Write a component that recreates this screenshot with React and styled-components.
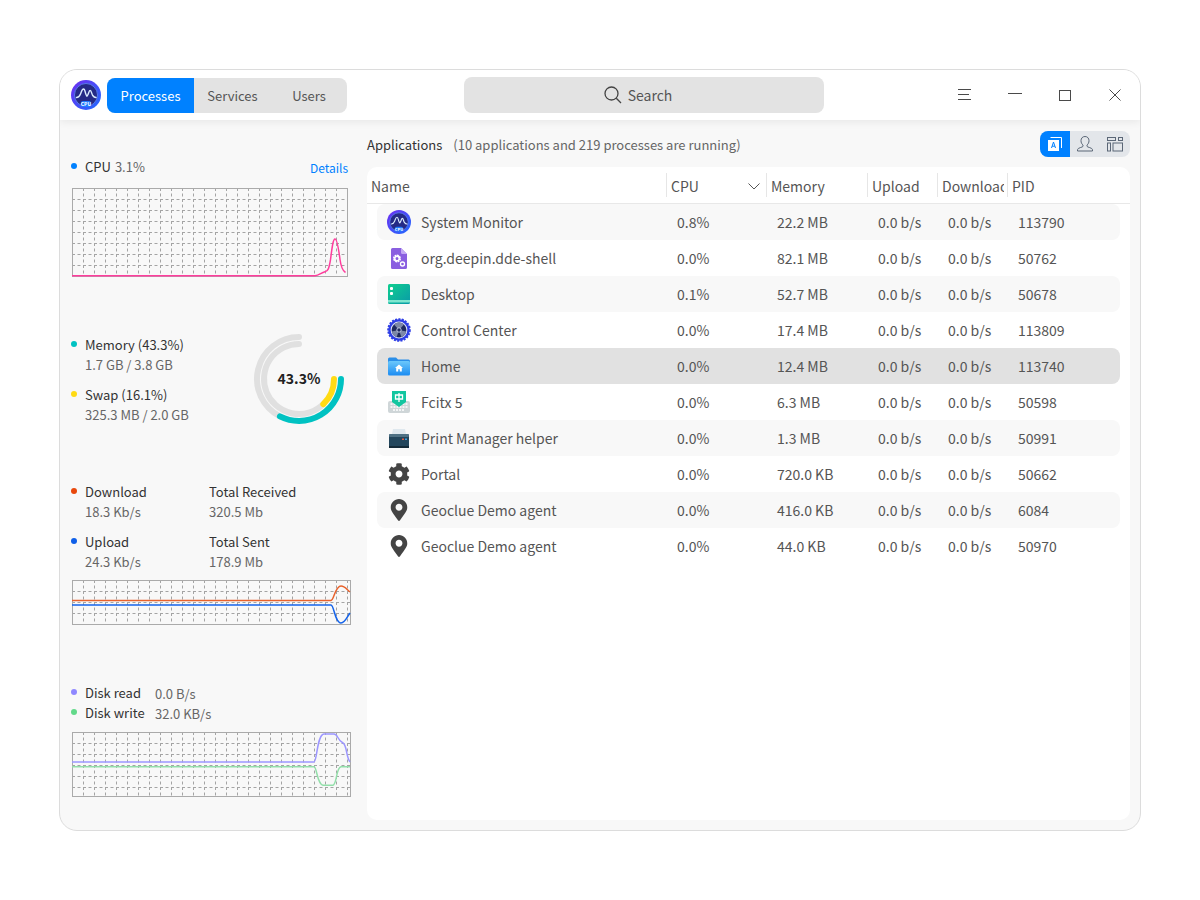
import React from 'react';
import styled, { createGlobalStyle } from 'styled-components';
import { FaCog, FaMapMarkerAlt } from 'react-icons/fa';

const GlobalStyle = createGlobalStyle`
    html, body {
        margin: 0;
        background: #fff;
    }
    body {
        font-family: "Noto Sans CJK SC", "Noto Sans", sans-serif;
        font-size: 14px;
        color: #414141;
    }
`;

const Window = styled.div`
    box-sizing: border-box;
    width: 1082px;
    height: 762px;
    margin: 69px 0 0 59px;
    border: 1px solid #dcdcdc;
    border-radius: 18px;
    background: #f8f8f8;
    overflow: hidden;
    display: flex;
    flex-direction: column;
`;

const TitleBar = styled.header`
    position: relative;
    z-index: 2;
    flex: none;
    height: 50px;
    display: grid;
    grid-template-columns: 404px 360px 1fr;
    align-items: center;
    background: #fff;
    box-shadow: 0 2px 8px rgba(0, 0, 0, 0.07);
`;

const TitleLeft = styled.div`
    display: flex;
    align-items: center;
    gap: 6px;
    padding-left: 11px;
`;

const Tabs = styled.div`
    display: flex;
    height: 35px;
    border-radius: 8px;
    overflow: hidden;
    background: #e3e3e3;
`;

const Tab = styled.div`
    width: ${p => p.$width}px;
    display: flex;
    align-items: center;
    justify-content: center;
    font-size: 13px;
    color: ${p => (p.$active ? '#fff' : '#555')};
    background: ${p => (p.$active ? '#0081ff' : 'transparent')};
`;

const SearchBox = styled.div`
    box-sizing: border-box;
    height: 36px;
    padding-right: 12px;
    border-radius: 8px;
    background: #e3e3e3;
    display: flex;
    align-items: center;
    justify-content: center;
    gap: 6px;
    color: #555;
`;

const WindowButtons = styled.div`
    display: flex;
    justify-content: flex-end;
`;

const WindowButton = styled.div`
    width: 50px;
    height: 50px;
    display: flex;
    align-items: center;
    justify-content: center;
    color: #4a4a4a;
`;

const Body = styled.div`
    flex: 1;
    min-height: 0;
    display: flex;
`;

const Sidebar = styled.aside`
    flex: none;
    box-sizing: border-box;
    width: 307px;
    padding: 37px 0 0 12px;
`;

const Section = styled.section`
    margin-top: ${p => p.$top || 0}px;
`;

const HeadRow = styled.div`
    width: 276px;
    display: flex;
    align-items: center;
    justify-content: space-between;
    height: 20px;
`;

const Legend = styled.div`
    display: flex;
    align-items: center;
    height: 20px;
    line-height: 20px;
    font-size: 13px;
    color: #333;
    white-space: nowrap;
`;

const Dot = styled.span`
    flex: none;
    width: 6px;
    height: 6px;
    margin: -2px 8px 0 -1px;
    border-radius: 50%;
    background: ${p => p.$color};
`;

const Muted = styled.span`
    color: #666;
    margin-left: ${p => p.$left || 0}px;
`;

const SubValue = styled.div`
    height: 20px;
    line-height: 20px;
    padding-left: ${p => (p.$flush ? 0 : 13)}px;
    font-size: 13px;
    color: #666;
    white-space: nowrap;
`;

const DetailsLink = styled.a`
    font-size: 12px;
    color: #0081ff;
`;

const Chart = styled.svg`
    display: block;
    margin-top: ${p => p.$top}px;
`;

const MemoryBlock = styled.div`
    width: 276px;
    height: 90px;
    display: flex;
    align-items: center;
    justify-content: space-between;
`;

const LegendGroup = styled.div`
    margin-top: ${p => p.$top || 0}px;
`;

const Ring = styled.svg`
    display: block;
    margin: -2px 2px 0 0;
`;

const NetGrid = styled.div`
    display: grid;
    grid-template-columns: 137px 1fr;
    row-gap: 10px;
`;

const DiskRow = styled.div`
    display: grid;
    grid-template-columns: 83px 1fr;
    align-items: center;
    height: 20px;
    font-size: 13px;
`;

const Main = styled.main`
    flex: 1;
    min-width: 0;
    display: flex;
    flex-direction: column;
    padding: 11px 10px 10px 0;
`;

const MainHead = styled.div`
    flex: none;
    height: 26px;
    display: flex;
    align-items: center;
    justify-content: space-between;
    font-size: 13px;
`;

const Caption = styled.div`
    color: #333;
`;

const ViewSwitch = styled.div`
    display: flex;
    width: 90px;
    height: 26px;
    border-radius: 8px;
    overflow: hidden;
    background: #e3e6ea;
`;

const ViewButton = styled.div`
    width: 30px;
    display: flex;
    align-items: center;
    justify-content: center;
    background: ${p => (p.$active ? '#0081ff' : 'transparent')};
`;

const TableCard = styled.div`
    flex: 1;
    margin-top: 10px;
    border-radius: 10px;
    background: #fff;
`;

const TableHead = styled.div`
    height: 37px;
    box-sizing: border-box;
    display: grid;
    grid-template-columns: 299px 100px 101px 70px 70px 1fr;
    align-items: center;
    border-bottom: 1px solid #e8e8e8;
`;

const HeadCell = styled.div`
    display: flex;
    align-items: center;
    justify-content: space-between;
    box-sizing: border-box;
    height: 24px;
    padding: 2px 3px 0 4px;
    border-left: ${p => (p.$first ? 'none' : '1px solid #e6e6e6')};
    color: #555;
    white-space: nowrap;
`;

const HeadLabel = styled.span`
    overflow: hidden;
`;

const SortArrow = styled.svg`
    flex: none;
    margin-right: 3px;
`;

const Rows = styled.div`
    padding: 0 10px;
`;

const Row = styled.div`
    height: 36px;
    display: grid;
    grid-template-columns: 290px 100px 101px 70px 70px 1fr;
    align-items: center;
    border-radius: 8px;
    color: #555;
    background: ${p => (p.$selected ? '#e1e1e1' : p.$striped ? '#f8f8f8' : 'transparent')};
`;

const Cell = styled.div`
    padding-left: 10px;
    white-space: nowrap;
`;

const NameCell = styled(Cell)`
    display: flex;
    align-items: center;
    gap: 10px;
`;

const IconSlot = styled.span`
    flex: none;
    width: 24px;
    height: 24px;
    display: flex;
    align-items: center;
    justify-content: center;
    color: #444;
`;

const MonitorIcon = ({ size }) => (
    <svg width={size} height={size} viewBox="0 0 30 30">
        <defs>
            <linearGradient id={`mon${size}`} x1="0" y1="0" x2="1" y2="1">
                <stop offset="0" stopColor="#6f2df0" />
                <stop offset="1" stopColor="#1f6cff" />
            </linearGradient>
        </defs>
        <circle cx="15" cy="15" r="15" fill={`url(#mon${size})`} />
        <circle cx="15" cy="15" r="11.500" fill="#252a86" stroke="#5f8cf5" strokeWidth=".8" />
        <path d="M5.500 17.500c2.500 0 3-1 4-3.500s1.500-5 3-5 1.500 3 2.500 5.500 1 2 2 0 1-4 2.200-4 1.500 3.500 2.500 5 1.500 2 3.300 2" fill="none" stroke="#dcecff" strokeWidth="1.400" strokeLinecap="round" />
        <rect x="10" y="21" width="10" height="6" rx="2" fill="#1f7bff" />
        <text x="15" y="25.800" textAnchor="middle" fontSize="5" fontWeight="700" fill="#fff">CPU</text>
    </svg>
);

const ShellIcon = () => (
    <svg width="24" height="24" viewBox="0 0 24 24">
        <path d="M4 3.500A1.500 1.500 0 0 1 5.500 2H14l6 6v13.500a1.500 1.500 0 0 1-1.500 1.500h-13A1.500 1.500 0 0 1 4 21.500z" fill="#8a5fe0" />
        <path d="M14 2l6 6h-4.500A1.500 1.500 0 0 1 14 6.500z" fill="#c3a9f3" />
        <circle cx="10" cy="12.500" r="3" fill="none" stroke="#fff" strokeWidth="2" strokeDasharray="1.700 .6" />
        <circle cx="10" cy="12.500" r="2.200" fill="none" stroke="#fff" strokeWidth="1.400" />
        <circle cx="15.500" cy="18" r="2" fill="none" stroke="#fff" strokeWidth="1.300" />
    </svg>
);

const DesktopIcon = () => (
    <svg width="24" height="24" viewBox="0 0 24 24">
        <defs>
            <linearGradient id="desk" x1="0" y1="0" x2="1" y2="1">
                <stop offset="0" stopColor="#0fcf8f" />
                <stop offset="1" stopColor="#0a9aa8" />
            </linearGradient>
        </defs>
        <rect x="1" y="2" width="22" height="20" rx="1.500" fill="url(#desk)" />
        <rect x="3" y="5" width="3" height="3" rx="1" fill="#fff" />
        <rect x="3" y="10" width="3" height="3" rx="1" fill="#fff" />
        <rect x="1" y="18" width="22" height="2.500" fill="#7fe6cf" />
    </svg>
);

const ControlIcon = () => (
    <svg width="24" height="24" viewBox="0 0 24 24">
        <circle cx="12" cy="12" r="10.700" fill="#2f3fe6" stroke="#2f3fe6" strokeWidth="2.200" strokeDasharray="2 1.300" />
        <circle cx="12" cy="12" r="8.400" fill="#dfe4f7" />
        <circle cx="12" cy="12" r="7.400" fill="#1f2a5e" />
        <path d="M12 12L7 6.500a7.400 7.400 0 0 1 10 0zM12 12l7.300 1.500a7.400 7.400 0 0 1-5 5.500zM12 12l-2.300 7a7.400 7.400 0 0 1-5-5.500z" fill="#7d88a8" />
        <circle cx="12" cy="12" r="2.200" fill="#1f2a5e" stroke="#dfe4f7" strokeWidth=".8" />
    </svg>
);

const HomeIcon = () => (
    <svg width="24" height="24" viewBox="0 0 24 24">
        <defs>
            <linearGradient id="fold" x1="0" y1="0" x2="0" y2="1">
                <stop offset="0" stopColor="#6cc8fb" />
                <stop offset="1" stopColor="#1c8cf2" />
            </linearGradient>
        </defs>
        <path d="M1 5a1.500 1.500 0 0 1 1.500-1.500h6.500l2 2h10.500A1.500 1.500 0 0 1 23 7v3H1z" fill="#2a8ee8" />
        <rect x="1" y="7" width="22" height="14.500" rx="1.500" fill="url(#fold)" />
        <path d="M12 10.500l4 3.500h-1.200v3.500h-2v-2.300h-1.600v2.300h-2V14H8z" fill="#fff" />
    </svg>
);

const FcitxIcon = () => (
    <svg width="24" height="24" viewBox="0 0 24 24">
        <rect x="1" y="11" width="22" height="12" rx="2" fill="#cfd6d8" />
        <path d="M3.500 14h17M3.500 17h17M6 20h12" stroke="#fff" strokeWidth="1.400" strokeDasharray="2 1" />
        <path d="M5 1h14v11l-7 5-7-5z" fill="#12c6a0" />
        <path d="M8.500 5h7v4h-7zM12 3v9" fill="none" stroke="#fff" strokeWidth="1.300" />
    </svg>
);

const PrinterIcon = () => (
    <svg width="24" height="24" viewBox="0 0 24 24">
        <path d="M6 3h12l1 5H5z" fill="#dfe8ee" />
        <path d="M2 10a2 2 0 0 1 2-2h16a2 2 0 0 1 2 2v11H2z" fill="#23465c" />
        <rect x="2" y="8" width="20" height="3" rx="1" fill="#4f7184" />
        <rect x="2" y="20" width="20" height="2" fill="#142a38" />
        <rect x="15" y="12.500" width="2" height="1.500" fill="#e05a44" />
        <rect x="18" y="12.500" width="2" height="1.500" fill="#3f9fe0" />
    </svg>
);

const rows = [
    { name: 'System Monitor', icon: <MonitorIcon size={24} />, cpu: '0.8%', mem: '22.2 MB', pid: '113790' },
    { name: 'org.deepin.dde-shell', icon: <ShellIcon />, cpu: '0.0%', mem: '82.1 MB', pid: '50762' },
    { name: 'Desktop', icon: <DesktopIcon />, cpu: '0.1%', mem: '52.7 MB', pid: '50678' },
    { name: 'Control Center', icon: <ControlIcon />, cpu: '0.0%', mem: '17.4 MB', pid: '113809' },
    { name: 'Home', icon: <HomeIcon />, cpu: '0.0%', mem: '12.4 MB', pid: '113740', selected: true },
    { name: 'Fcitx 5', icon: <FcitxIcon />, cpu: '0.0%', mem: '6.3 MB', pid: '50598' },
    { name: 'Print Manager helper', icon: <PrinterIcon />, cpu: '0.0%', mem: '1.3 MB', pid: '50991' },
    { name: 'Portal', icon: <FaCog size={22} />, cpu: '0.0%', mem: '720.0 KB', pid: '50662' },
    { name: 'Geoclue Demo agent', icon: <FaMapMarkerAlt size={22} />, cpu: '0.0%', mem: '416.0 KB', pid: '6084' },
    { name: 'Geoclue Demo agent', icon: <FaMapMarkerAlt size={22} />, cpu: '0.0%', mem: '44.0 KB', pid: '50970' },
];

// dashed 11px grid shared by the three graphs
const Graph = ({ width, height, top, children }) => {
    const xs = [];
    const ys = [];
    for (let x = 11; x < width; x += 11) xs.push(x + 0.5);
    for (let y = 11; y < height; y += 11) ys.push(y + 0.5);
    return (
        <Chart $top={top} width={width} height={height} viewBox={`0 0 ${width} ${height}`}>
            {xs.map(x => <line key={x} x1={x} x2={x} y1="0" y2={height} stroke="#a4a4a4" strokeDasharray="3 2.500" />)}
            {ys.map(y => <line key={y} x1="0" x2={width} y1={y} y2={y} stroke="#a4a4a4" strokeDasharray="3 2.500" />)}
            <rect x=".5" y=".5" width={width - 1} height={height - 1} fill="none" stroke="#aaa" />
            {children}
        </Chart>
    );
};

const Curve = ({ d, color }) => (
    <path d={d} fill="none" stroke={color} strokeWidth="1.500" />
);

// clockwise arc around the middle of the 94px ring, angles from 3 o'clock
const arc = (r, from, to) => {
    const point = deg => {
        const a = (deg * Math.PI) / 180;
        return `${47 + r * Math.cos(a)} ${47 + r * Math.sin(a)}`;
    };
    return `M${point(from)}A${r} ${r} 0 ${to - from > 180 ? 1 : 0} 1 ${point(to)}`;
};

export default function App() {
    return (
        <>
            <GlobalStyle />
            <Window>
                <TitleBar>
                    <TitleLeft>
                        <MonitorIcon size={30} />
                        <Tabs>
                            <Tab $active $width={87}>Processes</Tab>
                            <Tab $width={77}>Services</Tab>
                            <Tab $width={76}>Users</Tab>
                        </Tabs>
                    </TitleLeft>
                    <SearchBox>
                        <svg width="18" height="18" viewBox="0 0 18 18" fill="none" stroke="#444" strokeWidth="1.300">
                            <circle cx="7.500" cy="7.500" r="6.500" />
                            <path d="M12.300 12.300L17 17" />
                        </svg>
                        Search
                    </SearchBox>
                    <WindowButtons>
                        <WindowButton>
                            <svg width="14" height="12" viewBox="0 0 14 12" stroke="currentColor">
                                <path d="M0 .5h13M0 5.500h11M0 10.500h13" />
                            </svg>
                        </WindowButton>
                        <WindowButton>
                            <svg width="14" height="12" viewBox="0 0 14 12" stroke="currentColor">
                                <path d="M0 4.500h14" />
                            </svg>
                        </WindowButton>
                        <WindowButton>
                            <svg width="12" height="11" viewBox="0 0 12 11" fill="none" stroke="currentColor">
                                <rect x=".5" y=".5" width="11" height="10" />
                            </svg>
                        </WindowButton>
                        <WindowButton>
                            <svg width="12" height="12" viewBox="0 0 12 12" fill="none" stroke="currentColor">
                                <path d="M.5.500l11 11M11.500.500l-11 11" />
                            </svg>
                        </WindowButton>
                    </WindowButtons>
                </TitleBar>
                <Body>
                    <Sidebar>
                        <Section>
                            <HeadRow>
                                <Legend><Dot $color="#0081ff" />CPU<Muted $left={4}>3.1%</Muted></Legend>
                                <DetailsLink>Details</DetailsLink>
                            </HeadRow>
                            <Graph width={276} height={89} top={11}>
                                <Curve color="#ff3d9d" d="M0 87.700H243c4 0 6-3 10-4 3-.500 4-3 5.500-12C260 60 261 51 263 51s3.500 9 5 20.500c1.200 9 3 11.500 5.500 13" />
                            </Graph>
                        </Section>
                        <Section $top={58}>
                            <MemoryBlock>
                                <div>
                                    <Legend><Dot $color="#00c2c2" />Memory (43.3%)</Legend>
                                    <SubValue>1.7 GB / 3.8 GB</SubValue>
                                    <LegendGroup $top={10}>
                                        <Legend><Dot $color="#ffdb14" />Swap (16.1%)</Legend>
                                        <SubValue>325.3 MB / 2.0 GB</SubValue>
                                    </LegendGroup>
                                </div>
                                <Ring width="94" height="94" viewBox="0 0 94 94">
                                    <g fill="none" strokeWidth="6" strokeLinecap="round">
                                        <path d={arc(42, 117, 270)} stroke="#e0e0e0" />
                                        <path d={arc(35, 46, 270)} stroke="#e0e0e0" />
                                        <path d={arc(42, 0, 117)} stroke="#00c2c2" />
                                        <path d={arc(35, 0, 46)} stroke="#ffdb14" />
                                    </g>
                                    <text x="47" y="52" textAnchor="middle" fontSize="14" fontWeight="700" fill="#222">43.3%</text>
                                </Ring>
                            </MemoryBlock>
                        </Section>
                        <Section $top={57}>
                            <NetGrid>
                                <div>
                                    <Legend><Dot $color="#e8480c" />Download</Legend>
                                    <SubValue>18.3 Kb/s</SubValue>
                                </div>
                                <div>
                                    <Legend>Total Received</Legend>
                                    <SubValue $flush>320.5 Mb</SubValue>
                                </div>
                                <div>
                                    <Legend><Dot $color="#0f5fe8" />Upload</Legend>
                                    <SubValue>24.3 Kb/s</SubValue>
                                </div>
                                <div>
                                    <Legend>Total Sent</Legend>
                                    <SubValue $flush>178.9 Mb</SubValue>
                                </div>
                            </NetGrid>
                            <Graph width={279} height={45} top={8}>
                                <Curve color="#e8622c" d="M0 20.500H259c3 0 4-14.500 10-14.500 4 0 6 4 9 6" />
                                <Curve color="#1463ea" d="M0 25H259c3 0 4 18 10 18 4 0 6-6 9-10" />
                            </Graph>
                        </Section>
                        <Section $top={58}>
                            <DiskRow>
                                <Legend><Dot $color="#8f88ff" />Disk read</Legend>
                                <Muted>0.0 B/s</Muted>
                            </DiskRow>
                            <DiskRow>
                                <Legend><Dot $color="#62d98a" />Disk write</Legend>
                                <Muted>32.0 KB/s</Muted>
                            </DiskRow>
                            <Graph width={279} height={65} top={9}>
                                <Curve color="#9c96ff" d="M0 30H242c3 0 3-27.500 10-28h10c4 0 3 6 9 9 4 2 3 14 7 19" />
                                <Curve color="#93dfaa" d="M0 34.700H242c3 0 3 18 9 18.500h10c4-.500 3-18 8-18.500h9" />
                            </Graph>
                        </Section>
                    </Sidebar>
                    <Main>
                        <MainHead>
                            <Caption>Applications<Muted $left={11}>(10 applications and 219 processes are running)</Muted></Caption>
                            <ViewSwitch>
                                <ViewButton $active>
                                    <svg width="16" height="16" viewBox="0 0 16 16" fill="none">
                                        <path d="M3.500 1.500h11v10.500" stroke="#fff" />
                                        <rect x="1" y="4" width="11" height="11" fill="#fff" />
                                        <path d="M4.500 12l2-6 2 6M5.200 10.200h2.600" stroke="#0081ff" />
                                    </svg>
                                </ViewButton>
                                <ViewButton>
                                    <svg width="18" height="18" viewBox="0 0 18 18" fill="none" stroke="#5b6777">
                                        <path d="M9 1.500c-2.500 0-4 1.800-4 4.200 0 2 .8 3.300 2 4.300v1.300c0 1-5.500 1.400-5.500 3.400v1.300h15v-1.300c0-2-5.500-2.400-5.500-3.400V10c1.200-1 2-2.300 2-4.300 0-2.400-1.500-4.200-4-4.200z" />
                                    </svg>
                                </ViewButton>
                                <ViewButton>
                                    <svg width="16" height="16" viewBox="0 0 16 16" fill="none" stroke="#5b6777">
                                        <rect x=".5" y="1.500" width="8" height="3" />
                                        <rect x="11.500" y="1.500" width="4" height="3" />
                                        <rect x=".5" y="7" width="3" height="8" />
                                        <rect x="6" y="7" width="9.500" height="8" />
                                    </svg>
                                </ViewButton>
                            </ViewSwitch>
                        </MainHead>
                        <TableCard>
                            <TableHead>
                                <HeadCell $first>Name</HeadCell>
                                <HeadCell>
                                    CPU
                                    <SortArrow width="12" height="7" viewBox="0 0 12 7" fill="none" stroke="#555">
                                        <path d="M.5.500L6 6l5.500-5.500" />
                                    </SortArrow>
                                </HeadCell>
                                <HeadCell>Memory</HeadCell>
                                <HeadCell>Upload</HeadCell>
                                <HeadCell><HeadLabel>Download</HeadLabel></HeadCell>
                                <HeadCell>PID</HeadCell>
                            </TableHead>
                            <Rows>
                                {rows.map((r, i) => (
                                    <Row key={i} $striped={i % 2 === 0} $selected={r.selected}>
                                        <NameCell><IconSlot>{r.icon}</IconSlot>{r.name}</NameCell>
                                        <Cell>{r.cpu}</Cell>
                                        <Cell>{r.mem}</Cell>
                                        <Cell>0.0 b/s</Cell>
                                        <Cell>0.0 b/s</Cell>
                                        <Cell>{r.pid}</Cell>
                                    </Row>
                                ))}
                            </Rows>
                        </TableCard>
                    </Main>
                </Body>
            </Window>
        </>
    );
}
